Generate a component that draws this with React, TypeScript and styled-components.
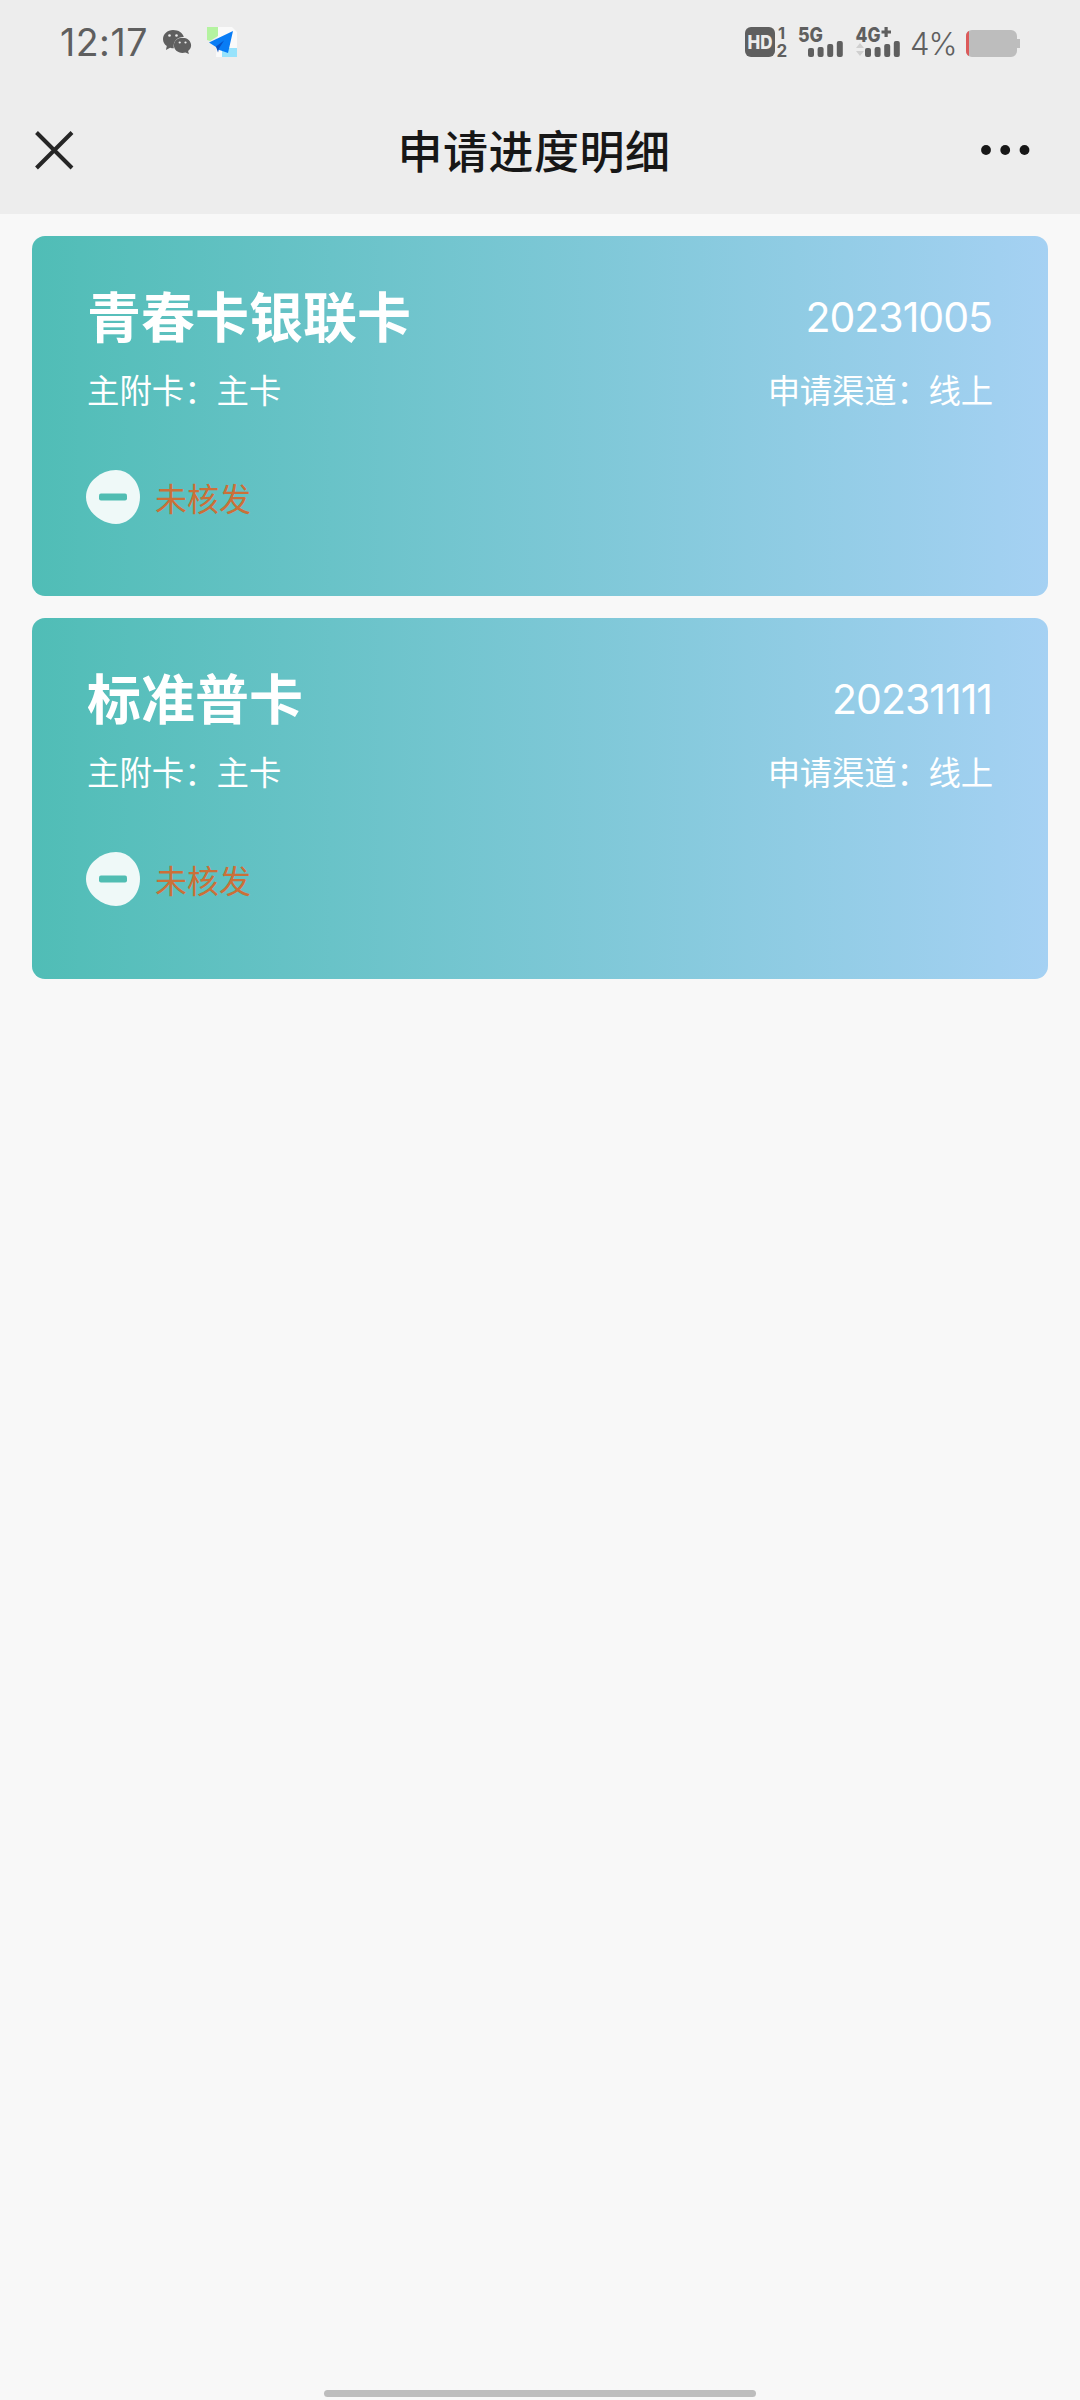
import React from "react";
import styled, { createGlobalStyle } from "styled-components";

const GlobalStyle = createGlobalStyle`
  * { box-sizing: border-box; }
  html, body { margin: 0; background: #f8f8f8; }
  body { font-family: Inter, "Noto Sans CJK SC", sans-serif; }
  svg { display: block; flex: none; }
`;

const Screen = styled.div`
  width: 1080px;
  height: 2400px;
  display: flex;
  flex-direction: column;
  background: #f8f8f8;
`;

const Header = styled.header`
  height: 214px;
  background: #ededed;
`;

const StatusBar = styled.div`
  height: 84px;
  padding: 0 60px 0 60px;
  display: flex;
  justify-content: space-between;
  align-items: center;
`;

const StatusGroup = styled.div`
  display: flex;
  align-items: center;
`;

const Clock = styled.span`
  width: 103px;
  padding-top: 2px;
  font-size: 37.5px;
  line-height: 82px;
  letter-spacing: 0.5px;
  color: #5f5f5f;
`;

const Percent = styled.span`
  width: 56px;
  font-size: 31px;
  line-height: 84px;
  font-weight: 300;
  padding-top: 3px;
  letter-spacing: -1px;
  color: #5f5f5f;
`;

const NavBar = styled.nav`
  height: 130px;
  display: grid;
  grid-template-columns: 120px 1fr 120px;
  align-items: center;
`;

const NavButton = styled.button<{ $end?: boolean }>`
  height: 130px;
  padding: ${(p) => (p.$end ? "1px 49px 0 0" : "1px 0 0 34px")};
  border: 0;
  background: none;
  display: flex;
  align-items: center;
  justify-content: ${(p) => (p.$end ? "flex-end" : "flex-start")};
`;

const NavTitle = styled.h1`
  margin: 0;
  padding: 8px 12px 0 0;
  text-align: center;
  font-size: 45px;
  line-height: 60px;
  font-weight: 500;
  letter-spacing: 0.5px;
  color: #171717;
`;

const CardList = styled.main`
  flex: 1;
  padding: 22px 32px 0;
  display: flex;
  flex-direction: column;
  gap: 22px;
`;

const Card = styled.article`
  height: 360.3px;
  padding: 48px 55px 0;
  border-radius: 13px;
  background: linear-gradient(90deg, #50bdb6 0%, #a5d1f3 100%);
  color: #fff;
`;

const Row = styled.div<{ $height: number }>`
  height: ${(p) => p.$height}px;
  display: flex;
  align-items: center;
  justify-content: space-between;
`;

const CardName = styled.h2`
  margin: 0;
  padding-top: 1px;
  font-size: 54px;
  line-height: 68px;
  font-weight: 700;
`;

const DateText = styled.span`
  padding: 0 1px 2px 0;
  font-size: 41px;
  line-height: 66px;
  letter-spacing: -1px;
`;

const Detail = styled.span<{ $tracking?: number }>`
  padding-top: 3px;
  font-size: 32.4px;
  line-height: 60px;
  letter-spacing: ${(p) => p.$tracking ?? 0}px;
`;

const Status = styled.div`
  margin-top: 42px;
  margin-left: -1px;
  display: flex;
  align-items: center;
  gap: 15px;
`;

const StatusText = styled.span`
  padding-top: 5px;
  font-size: 32px;
  line-height: 49px;
  color: #cb7038;
`;

const HomeArea = styled.footer`
  height: 10px;
  display: flex;
  justify-content: center;
`;

const HomeIndicator = styled.div`
  width: 432px;
  height: 7px;
  border-radius: 4px;
  background: #bdbdbd;
`;

const WeChatIcon = () => (
  <svg width="44" height="84" viewBox="163 0 44 84">
    <path fill="#5f5f5f" d="M173 30c-5.600 0-10 4-10 9 0 3 1.400 5.400 3.800 7l-.9 4 4.200-2.300c1.200.4 2.400.5 3.700.5-1.200-6.500 3.600-11.400 10-11.200C182.800 32.800 178.600 30 173 30z" />
    <path fill="#5f5f5f" d="M182.500 37.700c-5 0-8.600 3.400-8.600 7.600s3.600 7.600 8.600 7.600c1 0 2-.2 3-.5l3.400 1.700-.8-3c1.900-1.500 3-3.500 3-5.800 0-4.200-3.600-7.600-8.600-7.600z" />
    <g fill="#ededed">
      <circle cx="169.500" cy="35.500" r="1.300" />
      <circle cx="176.500" cy="35.500" r="1.300" />
      <circle cx="179.700" cy="42.500" r="1.100" />
      <circle cx="185.500" cy="42.500" r="1.100" />
    </g>
  </svg>
);

const PlaneIcon = () => (
  <svg width="32" height="84" viewBox="207 0 32 84">
    <path fill="#fafafa" d="M218 27h14l5 5v25h-21z" />
    <path fill="#b4f3a0" d="M207 27h11v9l-8 5-3-1z" />
    <path fill="#98e3fc" d="M222 48h15v9h-15z" />
    <path fill="#087cf5" d="M233 31l-24 11.500 7 4.500 2 2.500 10 3.500z" />
    <path fill="#0651c5" d="M216 46.500l8-6-5 8-1 4z" />
  </svg>
);

const bars = [
  { y: 48, h: 9 },
  { y: 47, h: 10 },
  { y: 44, h: 13 },
  { y: 41, h: 16 },
];

const SignalBars = ({ x }: { x: number }) => (
  <>
    {bars.map((bar, i) => (
      <rect key={i} x={x + i * 9.600} y={bar.y} width="6" height={bar.h} rx="2" />
    ))}
  </>
);

const NetworkIcons = () => (
  <svg width="166" height="84" viewBox="744 0 166 84" fontFamily="Inter" fontWeight="800" fill="#5f5f5f">
    <rect x="745" y="27" width="30" height="30" rx="6" />
    <text x="747.500" y="49" fontSize="19" fill="#ededed" textLength="25" lengthAdjust="spacingAndGlyphs">HD</text>
    <text x="778" y="39" fontSize="16.500" fontWeight="700">1</text>
    <text x="776.500" y="56.500" fontSize="17" fontWeight="700">2</text>
    <text x="798" y="42" fontSize="20.500" textLength="25" lengthAdjust="spacingAndGlyphs">5G</text>
    <text x="855.500" y="42" fontSize="20.500" textLength="25" lengthAdjust="spacingAndGlyphs">4G</text>
    <path d="M881.500 30.500h3v-3.500h3.200v3.500h3.300v3h-3.300v3.500h-3.200v-3.500h-3z" />
    <SignalBars x={808} />
    <SignalBars x={865} />
    <path fill="#cfcfcf" d="M856 48l4-5 4 5zM856 51h8l-4 5z" />
  </svg>
);

const BatteryIcon = () => (
  <svg width="54" height="84" viewBox="966 0 54 84">
    <path fill="#bdbdbd" d="M972 30h39a6 6 0 0 1 6 6v3h3v9h-3v3a6 6 0 0 1-6 6h-39a6 6 0 0 1-6-6V36a6 6 0 0 1 6-6z" />
    <path fill="#dc5a5a" d="M969 31v25c-2-1-3-2.500-3-5V36c0-2.500 1-4 3-5z" />
  </svg>
);

const CloseIcon = () => (
  <svg width="42" height="42" viewBox="0 0 42 42">
    <path d="M2.500 3.500l35.500 35.500M38 3.500L2.500 39" stroke="#262626" strokeWidth="4" />
  </svg>
);

const MoreIcon = () => (
  <svg width="50" height="12" viewBox="0 0 50 12" fill="#171717">
    <circle cx="5" cy="6" r="4.900" />
    <circle cx="24.200" cy="6" r="4.900" />
    <circle cx="43.500" cy="6" r="4.900" />
  </svg>
);

const MinusBadge = () => (
  <svg width="54" height="54" viewBox="0 0 54 54">
    <path fill="#eff9f8" d="M30 0C43 0 54 12 54 27S43 54 30 54C16 54 0 42 0 27S15 0 30 0z" />
    <rect x="13" y="23.500" width="28" height="7" rx="2" fill="#50bdb2" />
  </svg>
);

const applications = [
  { name: "青春卡银联卡", date: "20231005" },
  { name: "标准普卡", date: "20231111" },
];

export default function App() {
  return (
    <Screen>
      <GlobalStyle />
      <Header>
        <StatusBar>
          <StatusGroup>
            <Clock>12:17</Clock>
            <WeChatIcon />
            <PlaneIcon />
          </StatusGroup>
          <StatusGroup>
            <NetworkIcons />
            <Percent>4%</Percent>
            <BatteryIcon />
          </StatusGroup>
        </StatusBar>
        <NavBar>
          <NavButton aria-label="关闭"><CloseIcon /></NavButton>
          <NavTitle>申请进度明细</NavTitle>
          <NavButton $end aria-label="更多"><MoreIcon /></NavButton>
        </NavBar>
      </Header>
      <CardList>
        {applications.map((item) => (
          <Card key={item.date}>
            <Row $height={68}>
              <CardName>{item.name}</CardName>
              <DateText>{item.date}</DateText>
            </Row>
            <Row $height={76}>
              <Detail>主附卡：主卡</Detail>
              <Detail $tracking={-0.2}>申请渠道：线上</Detail>
            </Row>
            <Status>
              <MinusBadge />
              <StatusText>未核发</StatusText>
            </Status>
          </Card>
        ))}
      </CardList>
      <HomeArea><HomeIndicator /></HomeArea>
    </Screen>
  );
}
